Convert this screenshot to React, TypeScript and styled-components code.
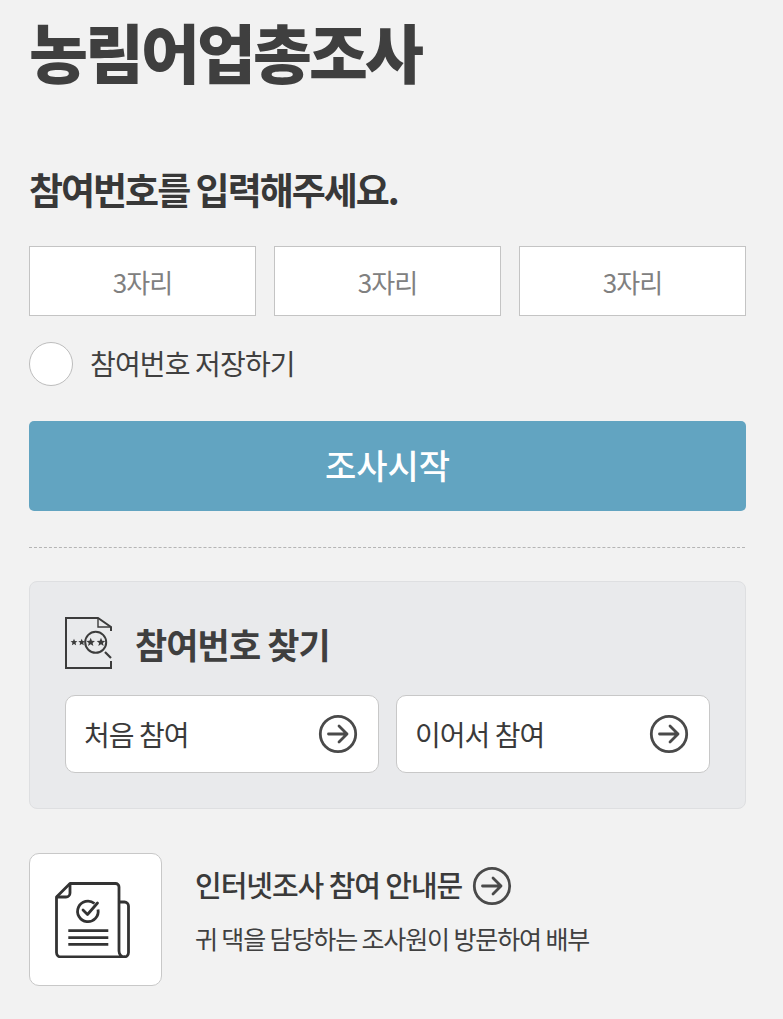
import React from "react";
import styled, { createGlobalStyle } from "styled-components";

const Global = createGlobalStyle`
  html, body { margin: 0; padding: 0; background: #f2f2f2; }
  body { font-family: "Noto Sans CJK KR", "Noto Sans", sans-serif; color: #333; }
  * { box-sizing: border-box; }
`;

const Page = styled.main`
  width: 783px;
  height: 1019px;
  overflow: hidden;
  padding: 0 37px 0 29px;
`;
const Title = styled.h1`
  margin: 0;
  height: 106px;
  font-size: 64px;
  line-height: 100px;
  font-weight: 900;
  letter-spacing: -2.9px;
  color: #3f3f3f;
`;
const Subtitle = styled.h2`
  margin: 55px 0 0;
  height: 58px;
  font-size: 37px;
  line-height: 56px;
  font-weight: 700;
  letter-spacing: -2px;
  color: #383838;
`;
const InputRow = styled.div`
  margin-top: 27px;
  display: grid;
  grid-template-columns: repeat(3, 227px);
  column-gap: 18px;
`;
const CodeInput = styled.input`
  height: 70px;
  width: 100%;
  border: 1px solid #c4c4c4;
  background: #fff;
  text-align: center;
  font: 400 26px "Noto Sans CJK KR", sans-serif;
  letter-spacing: -1px;
  outline: none;
  &::placeholder { color: #808080; opacity: 1; }
`;
const SaveRow = styled.label`
  margin-top: 26px;
  display: flex;
  align-items: center;
  gap: 17px;
  height: 44px;
`;
const Radio = styled.span`
  width: 44px;
  height: 44px;
  border-radius: 50%;
  border: 1px solid #bdbdbd;
  background: #fff;
`;
const SaveText = styled.span`
  font-size: 28px;
  line-height: 40px;
  margin-top: -3px;
  letter-spacing: -0.85px;
  color: #404040;
`;
const StartButton = styled.button`
  margin-top: 35px;
  display: block;
  width: 100%;
  height: 90px;
  padding: 0 0 3px;
  border: 0;
  border-radius: 5px;
  background: #62a4c1;
  color: #fff;
  font: 500 34px "Noto Sans CJK KR", sans-serif;
  letter-spacing: 0;
`;
const Divider = styled.hr`
  margin: 36px 1px 0 0;
  border: 0;
  border-top: 1px dashed #b5b5b5;
`;
const FindPanel = styled.section`
  margin-top: 33px;
  height: 228px;
  padding: 35px 35px 0;
  border: 1px solid #dedfe1;
  border-radius: 8px;
  background: #e9eaec;
`;
const FindHead = styled.div`
  display: flex;
  align-items: center;
  gap: 22px;
  height: 54px;
`;
const FindTitle = styled.h3`
  margin: -2px 0 0;
  font-size: 35px;
  font-weight: 700;
  letter-spacing: -0.9px;
  color: #3f3f3f;
`;
const FindButtons = styled.div`
  margin-top: 24px;
  display: grid;
  grid-template-columns: 314px 314px;
  column-gap: 17px;
`;
const FindButton = styled.button`
  height: 78px;
  display: flex;
  align-items: center;
  justify-content: space-between;
  padding: 0 20px 0 18px;
  border: 1px solid #c8c8c8;
  border-radius: 10px;
  background: #fff;
  color: #3a3a3a;
  font: 400 28px "Noto Sans CJK KR", sans-serif;
  letter-spacing: -0.95px;
`;
const GuideRow = styled.section`
  margin-top: 44px;
  display: flex;
  gap: 33px;
`;
const GuideIconBox = styled.div`
  width: 133px;
  height: 133px;
  padding: 1px 5px 0 0;
  display: flex;
  align-items: center;
  justify-content: center;
  background: #fff;
  border: 1px solid #c8c8c8;
  border-radius: 10px;
`;
const GuideBody = styled.div`
  padding-top: 11px;
`;
const GuideTitle = styled.h3`
  margin: 0;
  display: flex;
  align-items: center;
  gap: 10px;
  height: 44px;
  font-size: 29px;
  line-height: 40px;
  font-weight: 500;
  letter-spacing: -1.05px;
  color: #3a3a3a;
`;
const GuideLabel = styled.span`
  margin-top: -4px;
`;
const GuideText = styled.p`
  margin: 12px 0 0;
  font-size: 25px;
  line-height: 36px;
  letter-spacing: -1.13px;
  color: #404040;
`;

const ArrowIcon = () => (
  <svg width="40" height="40" viewBox="0 0 40 40" fill="none" stroke="#4a4a4a" strokeWidth="2.800">
    <circle cx="20" cy="20" r="17.700" />
    <path d="M10.500 20H29M21 12l8 8-8 8" strokeLinecap="round" strokeLinejoin="round" />
  </svg>
);

const star = (x: number, y: number, r: number) => {
  const pts: string[] = [];
  for (let i = 0; i < 10; i++) {
    const a = (Math.PI / 5) * i - Math.PI / 2;
    const q = i % 2 ? r * 0.45 : r;
    pts.push(`${(x + q * Math.cos(a)).toFixed(2)},${(y + q * Math.sin(a)).toFixed(2)}`);
  }
  return pts.join(" ");
};

const FindIcon = () => (
  <svg width="48" height="54" viewBox="0 0 48 54" fill="none" stroke="#3c3c3c" strokeWidth="2" style={{ flex: "none" }}>
    <path d="M46 14v-4L33 1H1v50h45v-7" />
    <path d="M33 1v9h13" strokeWidth="1.4" />
    <circle cx="30.700" cy="25.300" r="10.500" />
    <path d="M40 35l6 6" strokeWidth="2.200" />
    <g fill="#3c3c3c" stroke="none">
      <polygon points={star(9, 25.300, 3.600)} />
      <polygon points={star(16.700, 25.300, 3.600)} />
      <polygon points={star(25.700, 25.300, 4.500)} />
      <polygon points={star(36, 25.300, 4.500)} />
    </g>
  </svg>
);

const DocIcon = () => (
  <svg width="76" height="76" viewBox="0 0 76 76" fill="none" stroke="#333" strokeWidth="2.800" strokeLinejoin="round">
    <path d="M15 1.500H60.500a3.500 3.500 0 0 1 3.500 3.500V69a6 6 0 0 0 5.500 6H6A4.500 4.500 0 0 1 1.500 70.500V15z" />
    <path d="M15 1.500V11a4 4 0 0 1-4 4H1.500" />
    <path d="M64 20H69.500a4 4 0 0 1 4 4V70.500a4.500 4.500 0 0 1-4.500 4.500" />
    <path d="M39.500 21.500a10.300 10.300 0 1 0 3.500 6" />
    <path d="M28 28l4.500 4.500 10-11.500" strokeLinecap="round" />
    <path d="M13.300 48.700H53.300M13.300 55.700H53.300M13.300 62.300H53.300" />
  </svg>
);

export default function App() {
  return (
    <Page>
      <Global />
      <Title>농림어업총조사</Title>
      <Subtitle>참여번호를 입력해주세요.</Subtitle>
      <InputRow>
        <CodeInput placeholder="3자리" />
        <CodeInput placeholder="3자리" />
        <CodeInput placeholder="3자리" />
      </InputRow>
      <SaveRow>
        <Radio />
        <SaveText>참여번호 저장하기</SaveText>
      </SaveRow>
      <StartButton>조사시작</StartButton>
      <Divider />
      <FindPanel>
        <FindHead>
          <FindIcon />
          <FindTitle>참여번호 찾기</FindTitle>
        </FindHead>
        <FindButtons>
          <FindButton>처음 참여<ArrowIcon /></FindButton>
          <FindButton>이어서 참여<ArrowIcon /></FindButton>
        </FindButtons>
      </FindPanel>
      <GuideRow>
        <GuideIconBox><DocIcon /></GuideIconBox>
        <GuideBody>
          <GuideTitle><GuideLabel>인터넷조사 참여 안내문</GuideLabel><ArrowIcon /></GuideTitle>
          <GuideText>귀 댁을 담당하는 조사원이 방문하여 배부</GuideText>
        </GuideBody>
      </GuideRow>
    </Page>
  );
}
